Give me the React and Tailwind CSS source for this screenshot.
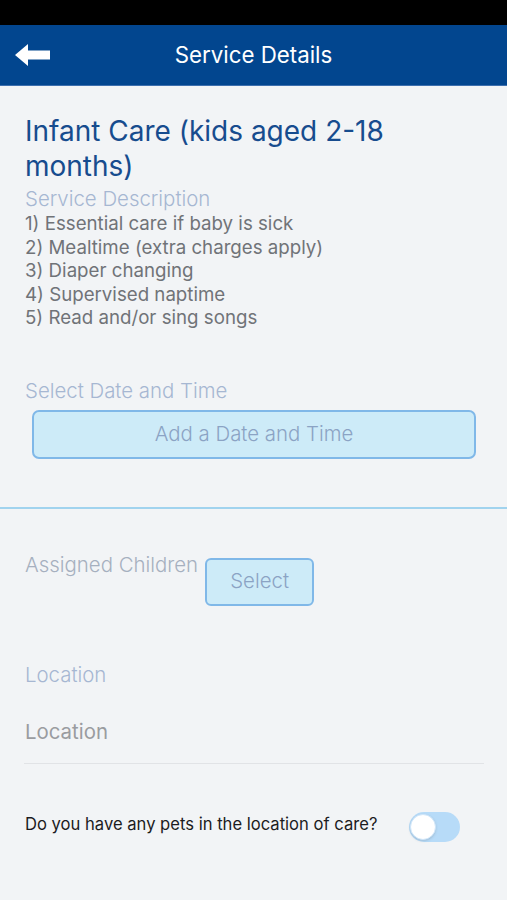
import React from 'react';

const items = [
  '1) Essential care if baby is sick',
  '2) Mealtime (extra charges apply)',
  '3) Diaper changing',
  '4) Supervised naptime',
  '5) Read and/or sing songs',
];

function BackArrow() {
  return (
    <svg width="36" height="22" viewBox="0 0 36 22" fill="#ffffff">
      <path d="M0 11 L13 0 L13 6.5 L35 6.5 L35 15.5 L13 15.5 L13 22 Z" />
    </svg>
  );
}

export default function App() {
  return (
    <div className="w-[507px] h-[900px] bg-[#f2f4f6] overflow-hidden font-['Inter','Liberation_Sans',sans-serif]">
      <div className="h-[25px] bg-black" />
      <div className="h-[61px] bg-[#02468f] border-b border-[#3d6fae] flex items-center relative">
        <div className="absolute left-[15px] top-[19px]">
          <BackArrow />
        </div>
        <div className="w-full text-center text-white text-[22.3px] leading-none">Service Details</div>
      </div>

      <div className="pl-[25px] pt-[28px]">
        <h1 className="text-[28px] leading-[35px] text-[#174c8e] pr-[100px]">Infant Care (kids aged 2-18 months)</h1>
        <p className="mt-[3px] text-[20.4px] leading-[24px] font-light text-[#a6b7d2]">Service Description</p>
        <ul className="mt-[1px] text-[18.7px] leading-[23.5px] text-[#707378]">
          {items.map((t) => (
            <li key={t}>{t}</li>
          ))}
        </ul>
        <p className="mt-[49px] text-[20.4px] leading-[24px] font-light text-[#a6b7d2]">Select Date and Time</p>
      </div>

      <div className="mt-[7px] ml-[32px] mr-[31px] h-[49px] rounded-[7px] border-2 border-[#80b8e8] bg-[#cdebf8] flex items-center justify-center text-[20.4px] font-light text-[#8ba3c4]">
        Add a Date and Time
      </div>

      <div className="mt-[48px] h-[2px] bg-[#a1d3ee]" />

      <div className="pl-[25px] pt-[44px] flex items-start">
        <span className="text-[20.4px] leading-[24px] font-light text-[#a6b0bf]">Assigned Children</span>
        <div className="ml-[7px] mt-[5px] w-[109px] h-[48px] rounded-[6px] border-2 border-[#80b8e8] bg-[#cdebf8] flex items-center justify-center text-[20.4px] font-light text-[#8ba3c4]">
          Select
        </div>
      </div>

      <div className="pl-[25px] pr-[23px]">
        <p className="mt-[57px] text-[20.4px] leading-[24px] font-light text-[#a6b7d2]">Location</p>
        <div className="mt-[33px] pb-[19px] border-b border-[#e1e3e6] -ml-[1px]">
          <p className="pl-[1px] text-[20.4px] leading-[24px] text-[#9a9ca0]">Location</p>
        </div>
        <div className="mt-[48px] flex items-center">
          <span className="text-[16.6px] leading-[20px] text-[#1c1c1e] mb-[6px]">Do you have any pets in the location of care?</span>
          <div className="ml-[32px] w-[51px] h-[30px] rounded-full bg-[#b7dbf8] relative">
            <div className="absolute left-[1px] top-[2px] w-[26px] h-[26px] rounded-full bg-white border border-[#cfe6fa] shadow-sm" />
          </div>
        </div>
      </div>
    </div>
  );
}
